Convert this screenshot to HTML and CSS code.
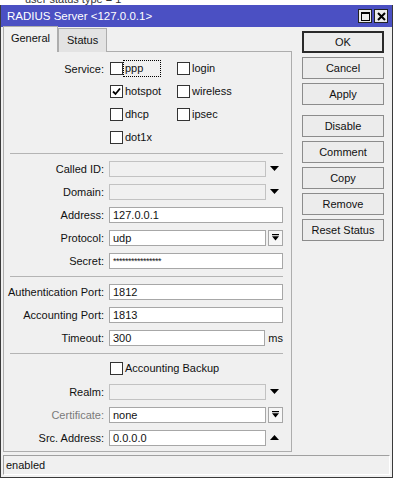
FILE: index.html
```html
<!DOCTYPE html>
<html>
<head>
<meta charset="utf-8">
<link rel="stylesheet" href="styles.css">
</head>
<body>
<div class="topstrip"><span>user status type = 1</span></div>
<div class="window">
  <div class="titlebar">
    <span class="title">RADIUS Server &lt;127.0.0.1&gt;</span>
    <div class="tbtns">
      <span class="tbtn"><svg width="11" height="11" viewBox="0 0 11 11"><rect x="1.5" y="1.5" width="8" height="8" fill="none" stroke="#000" stroke-width="1"/><line x1="1" y1="2" x2="10" y2="2" stroke="#000" stroke-width="2"/></svg></span>
      <span class="tbtn"><svg width="11" height="11" viewBox="0 0 11 11"><path d="M2 2 L9 9 M9 2 L2 9" stroke="#000" stroke-width="2"/></svg></span>
    </div>
  </div>
  <div class="content">
    <div class="leftcol">
      <div class="tabs">
        <div class="tab active">General</div>
        <div class="tab">Status</div>
      </div>
      <div class="panel">
        <div class="section">
          <div class="lbl">Service:</div>
          <div class="checks">
            <div class="cb"><span class="box"></span><span class="t focus">ppp</span></div>
            <div class="cb"><span class="box"></span><span class="t">login</span></div>
            <div class="cb"><span class="box"><svg width="11" height="11" viewBox="0 0 11 11"><path d="M2 5.5 L4.5 8 L9 2.5" fill="none" stroke="#000" stroke-width="1.8"/></svg></span><span class="t">hotspot</span></div>
            <div class="cb"><span class="box"></span><span class="t">wireless</span></div>
            <div class="cb"><span class="box"></span><span class="t">dhcp</span></div>
            <div class="cb"><span class="box"></span><span class="t">ipsec</span></div>
            <div class="cb"><span class="box"></span><span class="t">dot1x</span></div>
          </div>
        </div>
        <div class="sep"></div>
        <div class="section">
          <div class="lbl">Called ID:</div>
          <div class="field"><div class="input dis"></div><span class="arrow"><svg width="9" height="5" viewBox="0 0 9 5"><polygon points="0,0 9,0 4.5,5" fill="#000"/></svg></span></div>
          <div class="lbl">Domain:</div>
          <div class="field"><div class="input dis"></div><span class="arrow"><svg width="9" height="5" viewBox="0 0 9 5"><polygon points="0,0 9,0 4.5,5" fill="#000"/></svg></span></div>
          <div class="lbl">Address:</div>
          <div class="field"><div class="input full">127.0.0.1</div></div>
          <div class="lbl">Protocol:</div>
          <div class="field"><div class="input">udp</div><span class="ddbtn"><svg width="7" height="7" viewBox="0 0 7 7"><rect x="0" y="0" width="7" height="1.2" fill="#000"/><polygon points="0,2.3 7,2.3 3.5,6.5" fill="#000"/></svg></span></div>
          <div class="lbl">Secret:</div>
          <div class="field"><div class="input full secret">****************</div></div>
        </div>
        <div class="sep"></div>
        <div class="section">
          <div class="lbl">Authentication Port:</div>
          <div class="field"><div class="input full">1812</div></div>
          <div class="lbl">Accounting Port:</div>
          <div class="field"><div class="input full">1813</div></div>
          <div class="lbl">Timeout:</div>
          <div class="field"><div class="input">300</div><span class="unit">ms</span></div>
        </div>
        <div class="sep"></div>
        <div class="section">
          <div class="lbl"></div>
          <div class="field"><div class="cb"><span class="box"></span><span class="t">Accounting Backup</span></div></div>
          <div class="lbl">Realm:</div>
          <div class="field"><div class="input dis"></div><span class="arrow"><svg width="9" height="5" viewBox="0 0 9 5"><polygon points="0,0 9,0 4.5,5" fill="#000"/></svg></span></div>
          <div class="lbl muted">Certificate:</div>
          <div class="field"><div class="input">none</div><span class="ddbtn"><svg width="7" height="7" viewBox="0 0 7 7"><rect x="0" y="0" width="7" height="1.2" fill="#000"/><polygon points="0,2.3 7,2.3 3.5,6.5" fill="#000"/></svg></span></div>
          <div class="lbl">Src. Address:</div>
          <div class="field"><div class="input">0.0.0.0</div><span class="arrow"><svg width="9" height="5" viewBox="0 0 9 5"><polygon points="0,5 9,5 4.5,0" fill="#000"/></svg></span></div>
        </div>
      </div>
    </div>
    <div class="buttons">
      <div class="btn default">OK</div>
      <div class="btn">Cancel</div>
      <div class="btn">Apply</div>
      <div class="btn gap">Disable</div>
      <div class="btn">Comment</div>
      <div class="btn">Copy</div>
      <div class="btn">Remove</div>
      <div class="btn">Reset Status</div>
    </div>
  </div>
  <div class="statusbar">enabled</div>
</div>
</body>
</html>
```

FILE: styles.css
```css
html, body {
  margin: 0;
  padding: 0;
}
body {
  background: #fff;
  font-family: "Liberation Sans", Arial, sans-serif;
  font-size: 11px;
  color: #111;
  width: 397px;
  height: 482px;
  overflow: hidden;
}
.topstrip {
  height: 5px;
  overflow: hidden;
  padding-left: 25px;
}
.topstrip span {
  display: block;
  line-height: 10px;
  margin-top: -6px;
  color: #333;
}
.window {
  width: 393px;
  box-sizing: border-box;
  border: 1px solid #3a3a3a;
  border-top: 0;
  background: #f0f0f0;
}
.titlebar {
  height: 22px;
  background: #4b50c3;
  display: flex;
  align-items: center;
  justify-content: space-between;
  padding: 0 4px 0 6px;
  color: #fff;
  font-size: 11.5px;
}
.tbtns {
  display: flex;
  gap: 2px;
}
.tbtn {
  width: 14px;
  height: 14px;
  box-sizing: border-box;
  border: 1px solid #222;
  background: #ebebeb;
  display: flex;
  align-items: center;
  justify-content: center;
}
.content {
  display: flex;
  padding: 0 7px 0 2px;
  gap: 10px;
}
.leftcol {
  width: 289px;
}
.tabs {
  display: flex;
  align-items: flex-end;
  height: 25px;
  margin-bottom: -1px;
}
.tab {
  position: relative;
  box-sizing: border-box;
  height: 24px;
  border: 1px solid #adadad;
  border-bottom: 0;
  background: #e3e3e3;
  padding: 0 8px;
  line-height: 23px;
}
.tab.active {
  z-index: 1;
  height: 26px;
  background: #f0f0f0;
  width: 55px;
  text-align: center;
  padding: 0;
}
.panel {
  border: 1px solid #adadad;
  padding: 5px 0 2px 0;
}
.section {
  display: grid;
  grid-template-columns: 100px 174px;
  column-gap: 5px;
  grid-auto-rows: 23px;
  align-items: center;
}
.lbl {
  text-align: right;
  white-space: nowrap;
}
.lbl.muted {
  color: #7a7a7a;
}
.checks {
  grid-row: span 4;
  align-self: stretch;
  display: grid;
  grid-template-columns: 67px 67px;
  grid-auto-rows: 23px;
  align-items: center;
}
.cb {
  display: flex;
  align-items: center;
}
.box {
  width: 13px;
  height: 13px;
  box-sizing: border-box;
  border: 1px solid #333;
  background: #fff;
  margin-left: 1px;
  display: flex;
  align-items: center;
  justify-content: center;
}
.cb .t {
  box-sizing: border-box;
  border: 1px solid transparent;
  padding: 0 1px;
  height: 17px;
  line-height: 15px;
  white-space: nowrap;
}
.cb .t.focus {
  border: 1px dotted #000;
  width: 38px;
}
.sep {
  height: 1px;
  background: #b4b4b4;
  margin: 4px 8px 3px 6px;
}
.field {
  display: flex;
  align-items: center;
}
.input {
  box-sizing: border-box;
  height: 16px;
  width: 157px;
  border: 1px solid #a7a7a7;
  background: #fff;
  padding: 0 3px;
  line-height: 14px;
  white-space: nowrap;
  overflow: hidden;
}
.input.full {
  width: 174px;
}
.input.dis {
  background: #f0f0f0;
  border-color: #c2c2c2;
}
.input.secret {
  font-size: 9px;
  letter-spacing: -0.5px;
}
.arrow {
  width: 17px;
  display: flex;
  justify-content: center;
}
.ddbtn {
  box-sizing: border-box;
  width: 15px;
  height: 16px;
  margin-left: 2px;
  border: 1px solid #a7a7a7;
  background: #f7f7f7;
  display: flex;
  align-items: center;
  justify-content: center;
}
.unit {
  margin-left: 3px;
}
.buttons {
  width: 82px;
  padding-top: 4px;
  display: flex;
  flex-direction: column;
  gap: 4px;
}
.btn {
  box-sizing: border-box;
  height: 22px;
  border: 1px solid #8c8c8c;
  background: #ececec;
  text-align: center;
  line-height: 20px;
}
.btn.default {
  border: 2px solid #2a2a2a;
  line-height: 18px;
}
.btn.gap {
  margin-top: 6px;
}
.statusbar {
  box-sizing: border-box;
  height: 20px;
  margin: 3px 2px 2px 2px;
  border-top: 1px solid #a0a0a0;
  border-left: 1px solid #a0a0a0;
  border-right: 1px solid #fff;
  border-bottom: 1px solid #fff;
  padding-left: 2px;
  line-height: 18px;
}
```
